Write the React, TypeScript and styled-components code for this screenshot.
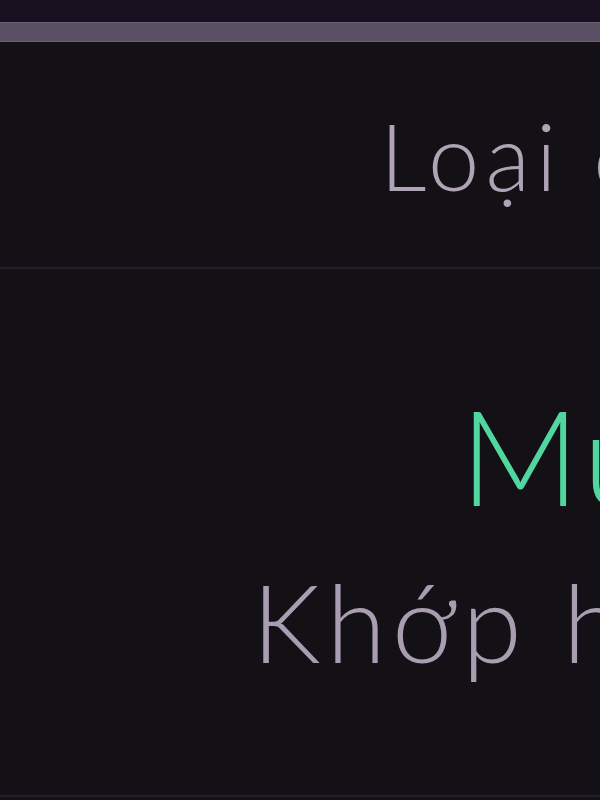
import styled, { createGlobalStyle } from "styled-components";

const GlobalStyle = createGlobalStyle`
    html, body {
        margin: 0;
        padding: 0;
        background: #131115;
    }
    body {
        font-family: "Lato", "Open Sans", sans-serif;
        overflow: hidden;
    }
`;

export default function App() {
    return <Page>
        <GlobalStyle/>
        <TopStrip/>
        <ProgressTrack/>
        <Header>
            <HeaderTitle>Loại câu hỏi</HeaderTitle>
        </Header>
        <Body>
            <Term>Mua sắm</Term>
            <Meaning>Khớp hình</Meaning>
        </Body>
    </Page>;
}

const Page = styled.div`
    width: 600px;
    height: 800px;
    overflow: hidden;

    display: flex;
    flex-direction: column;

    background-color: #131115;
`;

const TopStrip = styled.div`
    height: 22px;
    flex-shrink: 0;
    background-color: #19111f;
`;

const ProgressTrack = styled.div`
    height: 20px;
    flex-shrink: 0;
    box-sizing: border-box;
    border-top: 1px solid #6a6075;
    border-bottom: 1px solid #6a6075;
    background-color: #5a5064;
`;

const Header = styled.div`
    height: 227px;
    flex-shrink: 0;
    box-sizing: border-box;

    display: flex;
    align-items: flex-start;

    padding: 68px 0 0 380px;
    border-bottom: 2px solid #241c29;
`;

const HeaderTitle = styled.p`
    margin: 0;
    white-space: nowrap;

    font-size: 92px;
    font-weight: 300;
    letter-spacing: 6px;
    line-height: 1;
    color: #afa4b7;
`;

const Body = styled.div`
    height: 528px;
    flex-shrink: 0;
    box-sizing: border-box;

    display: flex;
    flex-direction: column;
    align-items: flex-start;

    border-bottom: 2px solid #241c29;
`;

const Term = styled.p`
    margin: 120px 0 0 460px;
    white-space: nowrap;

    font-size: 132px;
    font-weight: 300;
    letter-spacing: 4px;
    line-height: 1;
    color: #52d6a0;
`;

const Meaning = styled.p`
    margin: 46px 0 0 252px;
    white-space: nowrap;

    font-size: 108px;
    font-weight: 300;
    letter-spacing: 6px;
    line-height: 1;
    color: #a99eb1;
`;
